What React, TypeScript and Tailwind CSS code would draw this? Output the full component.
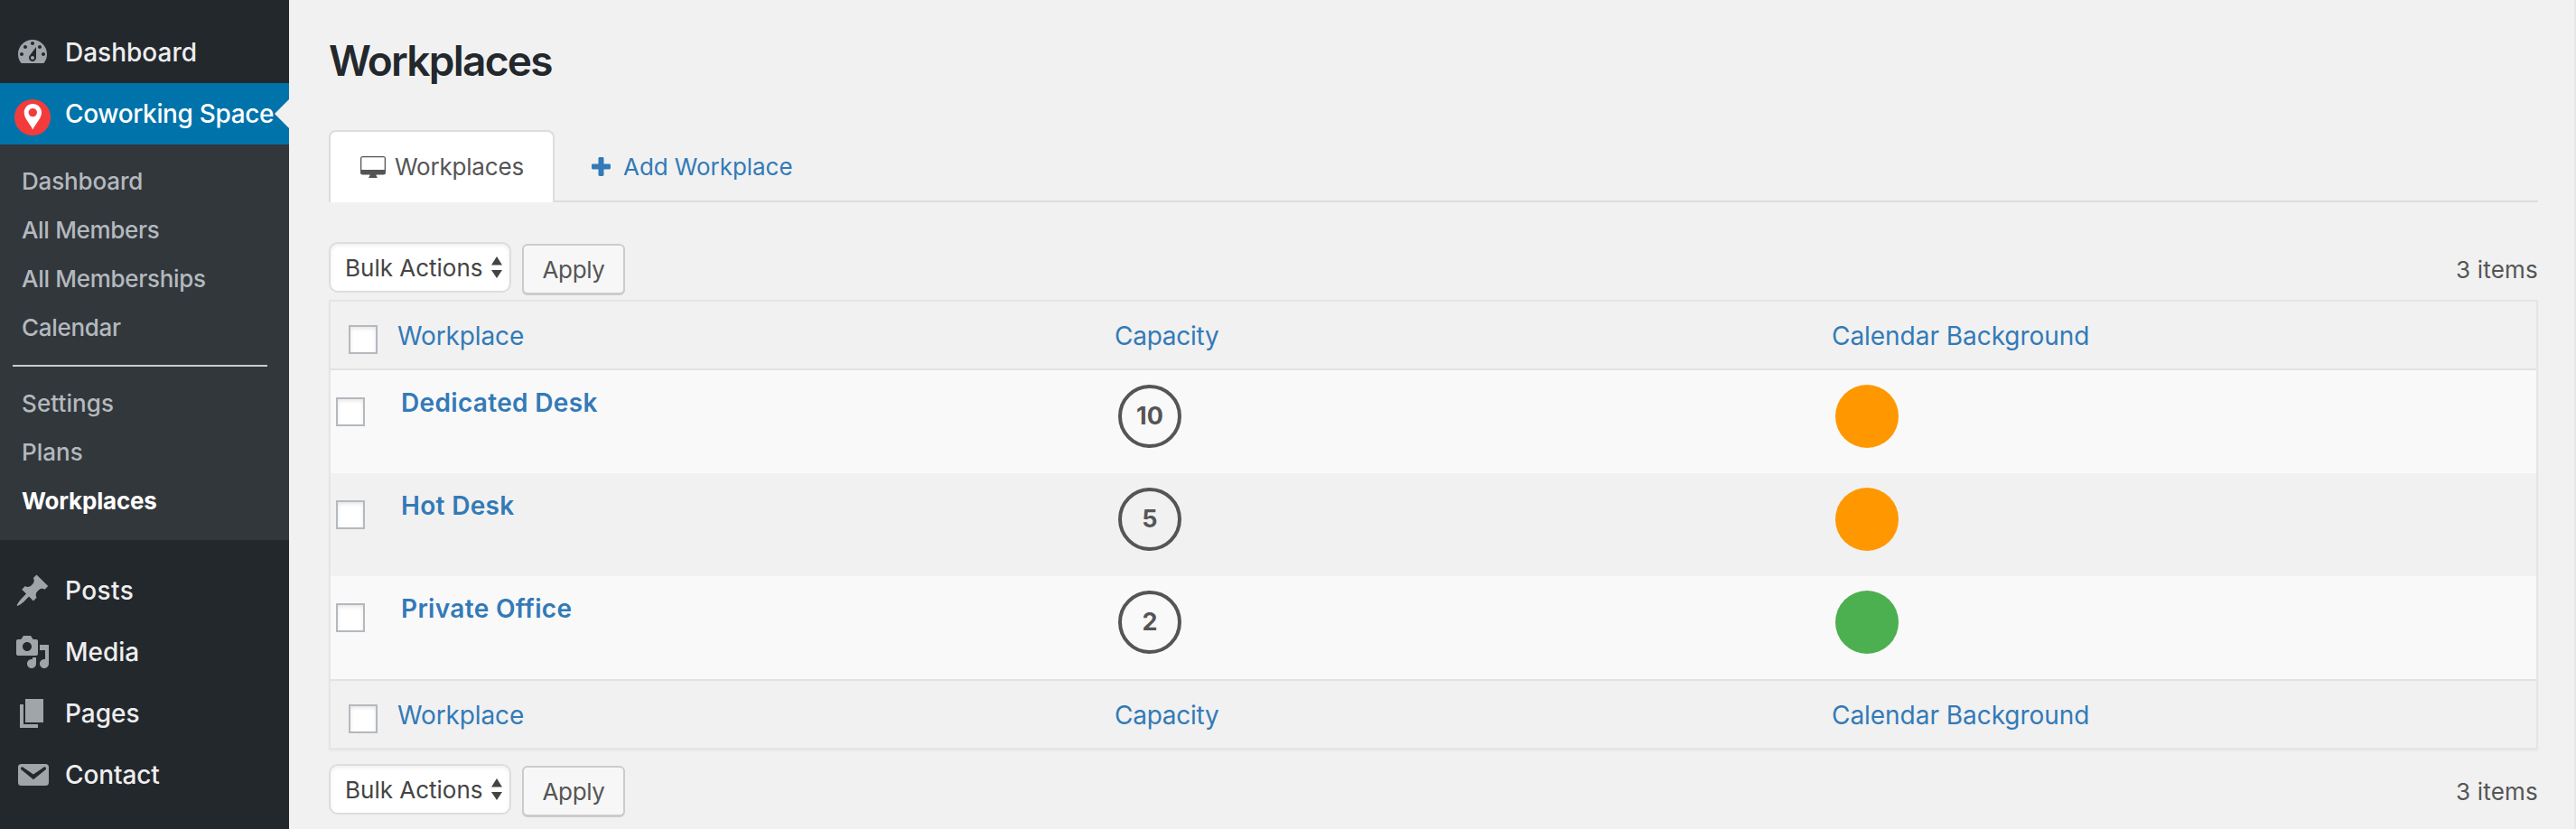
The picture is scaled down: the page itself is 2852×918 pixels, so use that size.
import type { ReactNode } from "react";

const ICONS = {
  dashboard:
    "M3.76 16h12.48c1.1-1.37 1.76-3.11 1.76-5 0-4.42-3.58-8-8-8s-8 3.58-8 8c0 1.89.66 3.63 1.76 5zM10 4c.55 0 1 .45 1 1s-.45 1-1 1-1-.45-1-1 .45-1 1-1zM6 6c.55 0 1 .45 1 1s-.45 1-1 1-1-.45-1-1 .45-1 1-1zm8 0c.55 0 1 .45 1 1s-.45 1-1 1-1-.45-1-1 .45-1 1-1zm-5.37 5.55L12 7v6c0 1.1-.9 2-2 2s-2-.9-2-2c0-.57.24-1.08.63-1.45zM4 10c.55 0 1 .45 1 1s-.45 1-1 1-1-.45-1-1 .45-1 1-1zm12 0c.55 0 1 .45 1 1s-.45 1-1 1-1-.45-1-1 .45-1 1-1zm-5 3c0-.55-.45-1-1-1s-1 .45-1 1 .45 1 1 1 1-.45 1-1z",
  posts:
    "M10.44 3.02l1.82-1.82 6.36 6.35-1.83 1.82c-1.05-.68-2.48-.57-3.41.36l-.75.75c-.92.93-1.04 2.35-.35 3.41l-1.83 1.82-2.41-2.41-2.8 2.79c-.42.42-3.38 2.71-3.8 2.29s1.86-3.39 2.28-3.81l2.79-2.79L4.1 9.36l1.83-1.82c1.05.69 2.48.57 3.4-.36l.75-.75c.93-.92 1.05-2.35.36-3.41z",
  media:
    "M13 11V4c0-.55-.45-1-1-1h-1.67L9 1H5L3.67 3H2c-.55 0-1 .45-1 1v7c0 .55.45 1 1 1h10c.55 0 1-.45 1-1zM7 4.5c1.38 0 2.5 1.12 2.5 2.5S8.38 9.5 7 9.5 4.5 8.38 4.5 7 5.62 4.5 7 4.5zM14 6h5v10.5c0 1.38-1.12 2.5-2.5 2.5S14 17.88 14 16.5s1.12-2.5 2.5-2.5c.17 0 .34.02.5.05V9h-3V6zm-4 8.05V13h2v3.5c0 1.38-1.12 2.5-2.5 2.5S7 17.88 7 16.5 8.12 14 9.5 14c.17 0 .34.02.5.05z",
  pages: "M6 15V2h10v13H6zm-1 1h8v2H3V5h2v11z",
  contact:
    "M3.87 4h13.25C18.37 4 19 4.59 19 5.79v8.42c0 1.19-.63 1.79-1.88 1.79H3.87c-1.25 0-1.88-.6-1.88-1.79V5.79c0-1.2.63-1.79 1.88-1.79zm6.62 8.6l6.74-5.53c.24-.2.43-.66.13-1.07-.29-.41-.82-.42-1.17-.17l-5.7 3.86L4.8 5.83c-.35-.25-.88-.24-1.17.17-.3.41-.11.87.13 1.07z",
};

function MenuItem({ icon, label, tracking = "" }: { icon: keyof typeof ICONS; label: string; tracking?: string }) {
  return (
    <a className="flex h-[68px] items-center gap-4 pl-4 text-[28px] font-medium text-[#eee]">
      <svg viewBox="0 0 20 20" className="size-10 shrink-0 fill-[#a0a5aa]">
        <path d={ICONS[icon]} />
      </svg>
      <span className={tracking}>{label}</span>
    </a>
  );
}

function SubItem({ children, className = "font-medium text-[#b4b9be]" }: { children: ReactNode; className?: string }) {
  return <a className={`flex h-[54px] items-center pb-0.5 pl-6 text-[26px] ${className}`}>{children}</a>;
}

function Sidebar() {
  return (
    <nav className="flex w-80 shrink-0 flex-col bg-[#23282d] pt-6 whitespace-nowrap">
      <MenuItem icon="dashboard" label="Dashboard" />
      <a className="relative flex h-[68px] items-center gap-4 bg-[#0073aa] pl-4 text-[28px] font-medium text-white">
        <svg viewBox="0 0 40 40" className="mt-2 size-10 shrink-0">
          <circle cx="20" cy="20" r="20" fill="#f43b3c" />
          <path
            fill="#fff"
            fillRule="evenodd"
            d="M20.3 5c-5.4 0-9.6 4.200-9.600 9.500 0 6.500 6 12 9.600 18.900 3.600-6.900 9.700-12.400 9.700-18.900 0-5.300-4.300-9.500-9.700-9.500zm0 4.900a4.700 4.700 0 1 1 0 9.400 4.700 4.700 0 0 1 0-9.400z"
          />
        </svg>
        <span className="tracking-[-0.36px]">Coworking Space</span>
        <span className="absolute top-[18px] right-0 size-0 border-16 border-transparent border-r-[#f1f1f1]" />
      </a>
      <div className="flex h-[438px] flex-col bg-[#32373c] pt-3.5">
        <SubItem className="font-medium tracking-[-0.15px] text-[#b4b9be]">Dashboard</SubItem>
        <SubItem className="font-medium tracking-[-0.33px] text-[#b4b9be]">All Members</SubItem>
        <SubItem className="font-medium tracking-[-0.3px] text-[#b4b9be]">All Memberships</SubItem>
        <SubItem className="font-medium tracking-[-0.3px] text-[#b4b9be]">Calendar</SubItem>
        <hr className="mt-3.5 mr-6 mb-3.5 ml-3.5 border-t-2 border-[#ccc]" />
        <SubItem className="font-medium tracking-[0.1px] text-[#b4b9be]">Settings</SubItem>
        <SubItem>Plans</SubItem>
        <SubItem className="font-bold tracking-[-0.19px] text-white">Workplaces</SubItem>
      </div>
      <div className="mt-[22px] flex flex-col">
        <MenuItem icon="posts" label="Posts" tracking="tracking-[0.4px]" />
        <MenuItem icon="media" label="Media" />
        <MenuItem icon="pages" label="Pages" />
        <MenuItem icon="contact" label="Contact" tracking="tracking-[-0.12px]" />
      </div>
    </nav>
  );
}

function Tabs() {
  return (
    <div className="mt-[44px] flex h-20 border-b-2 border-[#ddd] text-[26px] leading-[76px]">
      <a className="flex h-20 w-[250px] items-center rounded-t-lg border-2 border-b-0 border-[#ddd] bg-white pl-[33px] text-[#555]">
        <svg viewBox="0 0 28 24" className="mr-2.5 h-6 w-7 shrink-0">
          <path
            fill="#555"
            fillRule="evenodd"
            d="M2.500 0h23A2.500 2.500 0 0 1 28 2.500v15.500a2.500 2.500 0 0 1-2.500 2.500H17.500c0 1.200.4 1.900 1 2.300.5.300.3 1.200-.4 1.200H9.900c-.7 0-.9-.9-.4-1.200.6-.4 1-1.100 1-2.300h-8A2.500 2.500 0 0 1 0 18V2.500A2.500 2.500 0 0 1 2.500 0zM2 1.200a.7.7 0 0 0-.7.700V15h25.400V1.900a.7.7 0 0 0-.7-.7z"
          />
        </svg>
        <span className="tracking-[-0.2px]">Workplaces</span>
      </a>
      <a className="flex h-20 items-center pl-[41px] text-[#337ab7]">
        <svg viewBox="0 0 21 21" className="mr-3.5 size-[21px] shrink-0 fill-[#337ab7]">
          <path d="M8.900 0h3.200q1.400 0 1.400 1.400v6.100h6.100q1.400 0 1.400 1.400v3.200q0 1.400-1.400 1.400h-6.100v6.100q0 1.400-1.400 1.400H8.900q-1.400 0-1.400-1.400v-6.100H1.400Q0 13.500 0 12.100V8.900q0-1.400 1.400-1.400h6.100V1.400Q7.500 0 8.900 0z" />
        </svg>
        <span className="pt-0.5 tracking-[-0.06px]">Add Workplace</span>
      </a>
    </div>
  );
}

function TableNav() {
  return (
    <div className="flex h-[58px] items-start text-[26px] leading-none">
      <div className="flex h-14 w-[202px] items-center rounded-[10px] border-2 border-[#ddd] bg-white pl-4 text-[#444] shadow-[inset_0_2px_4px_rgba(0,0,0,0.07)]">
        <span className="w-[162px] pt-0.5">Bulk Actions</span>
        <svg viewBox="0 0 12 24" className="h-6 w-3 fill-[#444]">
          <path d="M6 0l6 9.500H0zM6 24l6-9H0z" />
        </svg>
      </div>
      <button className="mt-0.5 ml-3 h-14 w-[114px] rounded-md border-2 border-[#ccc] bg-[#f7f7f7] pt-0.5 tracking-[-0.4px] text-[#555] shadow-[0_1px_0_#ccc]">
        Apply
      </button>
      <span className="mt-0.5 ml-auto leading-[58px] tracking-[0.19px] text-[#555]">3 items</span>
    </div>
  );
}

function Checkbox() {
  return (
    <span className="block size-8 shrink-0 border-2 border-[#b4b9be] bg-white shadow-[inset_0_2px_4px_rgba(0,0,0,0.1)]" />
  );
}

function LabelRow() {
  return (
    <div className="flex h-[74px] pl-5 text-[28px] leading-[77px] text-[#337ab7]">
      <div className="w-[54px] pt-[26px]">
        <Checkbox />
      </div>
      <div className="w-[794px] tracking-[-0.12px]">Workplace</div>
      <div className="w-[794px] tracking-[-0.26px]">Capacity</div>
      <div className="tracking-[-0.04px]">Calendar Background</div>
    </div>
  );
}

const ROWS = [
  { name: "Dedicated Desk", capacity: 10, dot: "bg-[#ff9800]", bg: "bg-[#f9f9f9]" },
  { name: "Hot Desk", capacity: 5, dot: "bg-[#ff9800]", bg: "bg-[#f1f1f1]" },
  { name: "Private Office", capacity: 2, dot: "bg-[#4caf50]", bg: "bg-[#f9f9f9]" },
];

function Table() {
  return (
    <div className="flex flex-col border-2 border-[#e5e5e5] shadow-[0_2px_2px_rgba(0,0,0,0.04)]">
      <LabelRow />
      <div className="border-y-2 border-[#e1e1e1]">
        {ROWS.map((row) => (
          <div key={row.name} className={`flex h-[114px] pl-1.5 ${row.bg}`}>
            <div className="w-[72px] pt-[30px]">
              <Checkbox />
            </div>
            <div className="w-[794px] pt-5 text-[28px] leading-8 font-semibold tracking-[0.33px] text-[#337ab7]">
              {row.name}
            </div>
            <div className="w-[794px] pt-4">
              <span className="flex size-[70px] items-center justify-center rounded-full border-4 border-[#555] pb-0.5 text-[27px] leading-none font-bold text-[#555]">
                {row.capacity}
              </span>
            </div>
            <div className="pt-4">
              <span className={`block size-[70px] rounded-full ${row.dot}`} />
            </div>
          </div>
        ))}
      </div>
      <LabelRow />
    </div>
  );
}

export default function App() {
  return (
    <div className="flex h-[918px] w-[2852px] overflow-hidden bg-[#f1f1f1] font-['Inter',sans-serif]">
      <Sidebar />
      <main className="flex grow flex-col border-r-2 border-[#e6e6e6] pr-10 pl-11">
        <h1 className="mt-[35px] h-[65px] text-[46px] leading-[65px] font-semibold tracking-[-1.75px] text-[#23282d]">
          Workplaces
        </h1>
        <Tabs />
        <div className="mt-11">
          <TableNav />
        </div>
        <div className="mt-1.5 mb-4">
          <Table />
        </div>
        <TableNav />
      </main>
    </div>
  );
}
